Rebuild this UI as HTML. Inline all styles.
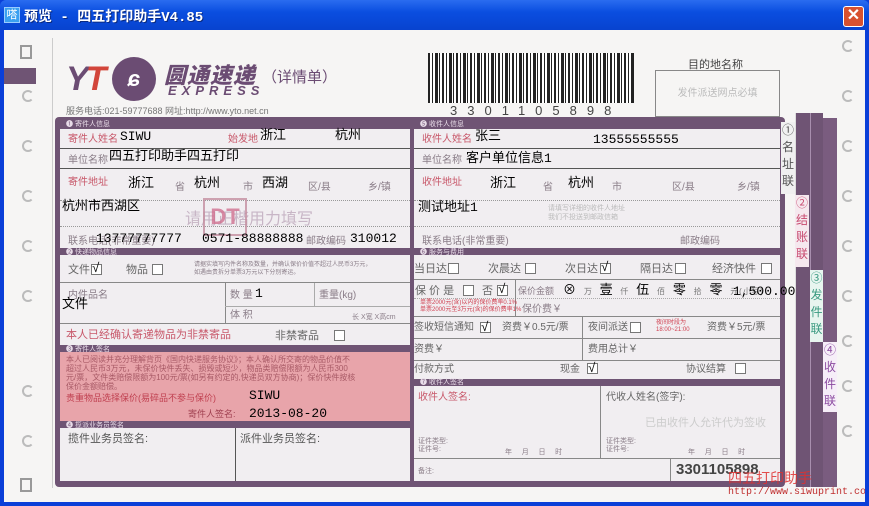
<!DOCTYPE html>
<html><head><meta charset="utf-8">
<style>
*{margin:0;padding:0;box-sizing:border-box}
body{width:869px;height:506px;overflow:hidden;background:#0a3fd8;font-family:"Liberation Sans","Noto Sans CJK SC",sans-serif;position:relative}
.a{position:absolute}
.t{position:absolute;white-space:nowrap;font-family:"Liberation Mono","Noto Sans CJK SC",monospace;font-size:13px;color:#000;line-height:14px}
.l{position:absolute;white-space:nowrap;font-size:10px;color:#8a7d88;line-height:11px}
.s{position:absolute;white-space:nowrap;font-size:11px;color:#666;line-height:12px}
.r{color:#c8586a}
.hd{position:absolute;background:#6f5474;color:#e8dce8;font-size:7px;line-height:7px;padding-left:6px}
.cb{display:inline-block;width:10px;height:10px;border:1px solid #777;background:#fff;vertical-align:middle}
.b{position:absolute;width:11px;height:11px;border:1px solid #777;background:#fff}
.hole{position:absolute;width:12px;height:12px;border:2px solid #bbb;border-right-color:transparent;border-radius:50%}
</style></head><body>
<div class="a" style="left:0;top:0;width:869px;height:30px;background:linear-gradient(#2a6cf0,#0a4ee0 40%,#0843cf);border-radius:6px 6px 0 0"></div>
<div class="a" style="left:4px;top:7px;width:16px;height:16px;background:#3aa0f0;border:1px solid #9cf;color:#fff;font-size:11px;line-height:14px;text-align:center">嗒</div>
<div class="a" style="left:24px;top:6px;color:#fff;font-weight:bold;font-size:14px;font-family:'Liberation Mono','Noto Sans CJK SC',monospace;text-shadow:1px 1px #0a2a80">预览 - 四五打印助手V4.85</div>
<div class="a" style="left:843px;top:6px;width:21px;height:21px;background:#d8512f;border:1px solid #fff;border-radius:3px;color:#fff;font-size:16px;line-height:18px;text-align:center;font-weight:bold">✕</div>
<div class="a" style="left:4px;top:30px;width:861px;height:472px;background:#f6f5f4"></div>
<div class="a" style="left:20px;top:45px;width:12px;height:14px;border:2px solid #999"></div>
<div class="a" style="left:4px;top:68px;width:32px;height:16px;background:#6f5474"></div>
<div class="hole" style="left:22px;top:90px"></div><div class="hole" style="left:22px;top:140px"></div><div class="hole" style="left:22px;top:190px"></div><div class="hole" style="left:22px;top:240px"></div><div class="hole" style="left:22px;top:290px"></div><div class="hole" style="left:22px;top:385px"></div><div class="hole" style="left:22px;top:435px"></div>
<div class="a" style="left:20px;top:478px;width:12px;height:14px;border:2px solid #999"></div>
<div class="hole" style="left:842px;top:40px"></div><div class="hole" style="left:842px;top:90px"></div><div class="hole" style="left:842px;top:140px"></div><div class="hole" style="left:842px;top:190px"></div><div class="hole" style="left:842px;top:240px"></div><div class="hole" style="left:842px;top:290px"></div><div class="hole" style="left:842px;top:335px"></div><div class="hole" style="left:842px;top:380px"></div><div class="hole" style="left:842px;top:425px"></div>
<div class="a" style="left:52px;top:38px;width:1px;height:450px;background:#ccc"></div>
<div class="a" style="left:66px;top:60px;font:italic 900 34px 'Liberation Sans';color:#6b4c73;letter-spacing:-3px">Y<span style="color:#d2453a">T</span></div>
<div class="a" style="left:112px;top:57px;width:44px;height:44px;border-radius:50%;background:#6b4c73;color:#fff;font:italic bold 22px 'Liberation Sans';text-align:center;line-height:44px">ɕ</div>
<div class="a" style="left:164px;top:58px;font:italic 900 22px 'Noto Sans CJK SC';color:#6b4c73;letter-spacing:1px">圆通速递</div>
<div class="a" style="left:168px;top:83px;font:italic bold 13px 'Liberation Sans';color:#6b4c73;letter-spacing:5px">EXPRESS</div>
<div class="a" style="left:262px;top:66px;font-size:15px;color:#6b4c73">（详情单）</div>
<div class="a" style="left:66px;top:104px;font-size:9px;color:#777">服务电话:021-59777688 网址:http://www.yto.net.cn</div>
<div class="a" style="left:428px;top:53px;width:206px;height:50px;background:repeating-linear-gradient(90deg,#222 0 2px,#fff 2px 4px,#222 4px 5px,#fff 5px 7px,#222 7px 10px,#fff 10px 11px,#222 11px 12px,#fff 12px 14px)"></div>
<div class="a" style="left:450px;top:103px;font-size:13px;color:#444;letter-spacing:10px">3301105898</div>
<div class="a" style="left:688px;top:56px;font-size:11px;color:#444">目的地名称</div>
<div class="a" style="left:655px;top:70px;width:125px;height:47px;border:1px solid #888;color:#bbb;font-size:10px;text-align:center;line-height:45px">发件派送网点必填</div>
<div class="a" style="left:55px;top:117px;width:730px;height:370px;background:#6f5474;border-radius:4px"></div>
<div class="a" style="left:795px;top:113px;width:28px;height:374px;background:#6f5474"></div>
<div class="a" style="left:823px;top:118px;width:14px;height:369px;background:#7a5c7f"></div>
<div class="a" style="left:795px;top:113px;width:1px;height:374px;background:#ddd"></div>
<div class="a" style="left:810px;top:113px;width:1px;height:374px;background:#a88fae"></div>
<div class="a" style="left:781px;top:122px;width:14px;height:72px;background:#f0f0f0;color:#555;font-size:12px;line-height:17px;text-align:center">①名址联</div>
<div class="a" style="left:795px;top:195px;width:14px;height:72px;background:#f5e8ee;color:#c84a70;font-size:12px;line-height:17px;text-align:center">②结账联</div>
<div class="a" style="left:810px;top:270px;width:13px;height:72px;background:#e8f5ef;color:#3a9a80;font-size:12px;line-height:17px;text-align:center">③发件联</div>
<div class="a" style="left:823px;top:342px;width:14px;height:70px;background:#f6eef8;color:#8b4aa0;font-size:12px;line-height:17px;text-align:center">④收件联</div>
<div class="hd" style="left:60px;top:121px;width:350px;height:8px">❶ 寄件人信息</div>
<div class="a" style="left:60px;top:129px;width:350px;height:119px;background:#f1eef1"></div>
<div class="a" style="left:60px;top:148px;width:350px;height:1px;background:#555"></div>
<div class="a" style="left:60px;top:168px;width:350px;height:1px;background:#555"></div>
<div class="a" style="left:60px;top:200px;width:350px;border-top:1px dotted #999"></div>
<div class="a" style="left:60px;top:226px;width:350px;border-top:1px dotted #999"></div>
<div class="l r" style="left:68px;top:134px">寄件人姓名</div><div class="l r" style="left:228px;top:134px">始发地</div>
<div class="l" style="left:68px;top:155px">单位名称</div>
<div class="l r" style="left:68px;top:177px">寄件地址</div><div class="l" style="left:175px;top:182px">省</div><div class="l" style="left:243px;top:182px">市</div><div class="l" style="left:308px;top:182px">区/县</div><div class="l" style="left:368px;top:182px">乡/镇</div>
<div class="a" style="left:185px;top:205px;font-size:16px;color:#c8b6c6">请用正楷用力填写</div>
<div class="a" style="left:203px;top:198px;width:44px;height:38px;border:2px solid #c58fa0;color:#d07090;font:bold 22px 'Liberation Sans';text-align:center;line-height:34px;opacity:.8">DT</div>
<div class="l" style="left:68px;top:236px">联系电话(非常重要)</div><div class="l" style="left:306px;top:236px">邮政编码</div>
<div class="hd" style="left:60px;top:249px;width:350px;height:6px">❷ 快递物品信息</div>
<div class="a" style="left:60px;top:255px;width:350px;height:90px;background:#f1eef1"></div>
<div class="a" style="left:60px;top:282px;width:350px;height:1px;background:#888"></div>
<div class="a" style="left:225px;top:283px;width:1px;height:40px;background:#888"></div>
<div class="a" style="left:225px;top:306px;width:185px;height:1px;background:#aaa"></div>
<div class="a" style="left:314px;top:283px;width:1px;height:23px;background:#aaa"></div>
<div class="a" style="left:60px;top:323px;width:350px;height:1px;background:#888"></div>
<div class="s" style="left:68px;top:264px">文件</div><div class="b" style="left:91px;top:264px"></div>
<div class="s" style="left:126px;top:264px">物品</div><div class="b" style="left:152px;top:264px"></div>
<div class="l" style="left:194px;top:261px;font-size:6px;line-height:8px">请据实填写内件名称及数量，并确认保价价值不超过人民币3万元，<br>如遇由贵拆分单票3万元以下分别寄运。</div>
<div class="l" style="left:68px;top:290px">内件品名</div><div class="l" style="left:230px;top:290px">数 量</div><div class="l" style="left:319px;top:290px">重量(kg)</div>
<div class="l" style="left:230px;top:310px">体 积</div><div class="l" style="left:352px;top:312px;font-size:7px">长 X宽 X高cm</div>
<div class="l r" style="left:66px;top:330px;font-size:11px">本人已经确认寄递物品为非禁寄品</div>
<div class="s" style="left:275px;top:330px">非禁寄品</div><div class="b" style="left:334px;top:330px"></div>
<div class="hd" style="left:60px;top:346px;width:350px;height:6px">❸ 寄件人签名</div>
<div class="a" style="left:60px;top:352px;width:350px;height:69px;background:#e8a4aa"></div>
<div class="l" style="left:66px;top:355px;font-size:8px;line-height:9px;color:#a85a66">本人已阅读并充分理解背页《国内快递服务协议》；本人确认所交寄的物品价值不<br>超过人民币3万元，未保价快件丢失、损毁或短少，物品类赔偿限额为人民币300<br>元/票，文件类赔偿限额为100元/票(如另有约定的,快递员双方协商)；保价快件按核<br>保价金额赔偿。</div>
<div class="l" style="left:66px;top:393px;font-size:9px;color:#c04050">贵重物品选择保价(易碎品不参与保价)</div>
<div class="l" style="left:188px;top:409px;font-size:9px;color:#a04050">寄件人签名:</div>
<div class="hd" style="left:60px;top:422px;width:350px;height:6px">❹ 揽派业务员签名</div>
<div class="a" style="left:60px;top:428px;width:350px;height:53px;background:#f1eef1"></div>
<div class="a" style="left:235px;top:428px;width:1px;height:53px;background:#555"></div>
<div class="l" style="left:68px;top:434px;font-size:11px;color:#555">揽件业务员签名:</div>
<div class="l" style="left:240px;top:434px;font-size:11px;color:#555">派件业务员签名:</div>
<div class="hd" style="left:414px;top:121px;width:366px;height:8px">❺ 收件人信息</div>
<div class="a" style="left:414px;top:129px;width:366px;height:119px;background:#f1eef1"></div>
<div class="a" style="left:414px;top:148px;width:366px;height:1px;background:#555"></div>
<div class="a" style="left:414px;top:168px;width:366px;height:1px;background:#555"></div>
<div class="a" style="left:414px;top:200px;width:366px;border-top:1px dotted #999"></div>
<div class="a" style="left:414px;top:226px;width:366px;border-top:1px dotted #999"></div>
<div class="l r" style="left:422px;top:134px">收件人姓名</div>
<div class="l" style="left:422px;top:155px">单位名称</div>
<div class="l r" style="left:422px;top:177px">收件地址</div><div class="l" style="left:543px;top:182px">省</div><div class="l" style="left:612px;top:182px">市</div><div class="l" style="left:672px;top:182px">区/县</div><div class="l" style="left:737px;top:182px">乡/镇</div>
<div class="l" style="left:548px;top:204px;font-size:7px;line-height:9px;color:#bbb">请填写详细的收件人地址<br>我们不投送到邮政信箱</div>
<div class="l" style="left:422px;top:236px">联系电话(非常重要)</div><div class="l" style="left:680px;top:236px">邮政编码</div>
<div class="hd" style="left:414px;top:249px;width:366px;height:6px">❻ 服务与费用</div>
<div class="a" style="left:414px;top:255px;width:366px;height:124px;background:#f1eef1"></div>
<div class="a" style="left:414px;top:279px;width:366px;height:1px;background:#888"></div>
<div class="a" style="left:414px;top:316px;width:366px;height:1px;background:#888"></div>
<div class="a" style="left:414px;top:338px;width:366px;height:1px;background:#888"></div>
<div class="a" style="left:414px;top:360px;width:366px;height:1px;background:#888"></div>
<div class="a" style="left:414px;top:298px;width:366px;border-top:1px dotted #aaa"></div>
<div class="a" style="left:515px;top:280px;width:1px;height:36px;background:#888"></div>
<div class="a" style="left:582px;top:316px;width:1px;height:44px;background:#888"></div>
<div class="s" style="left:414px;top:263px">当日达</div><div class="b" style="left:448px;top:263px"></div>
<div class="s" style="left:488px;top:263px">次晨达</div><div class="b" style="left:525px;top:263px"></div>
<div class="s" style="left:565px;top:263px">次日达</div><div class="b" style="left:600px;top:263px"></div>
<div class="s" style="left:640px;top:263px">隔日达</div><div class="b" style="left:675px;top:263px"></div>
<div class="s" style="left:712px;top:263px">经济快件</div><div class="b" style="left:761px;top:263px"></div>
<div class="s" style="left:415px;top:285px">保 价 是</div><div class="b" style="left:463px;top:285px"></div>
<div class="s" style="left:482px;top:285px">否</div><div class="b" style="left:497px;top:285px"></div>
<div class="l" style="left:518px;top:286px;font-size:9px">保价金额</div>
<div class="l" style="left:420px;top:300px;font-size:6px;line-height:7px;color:#d04050">单票2000元(含)以内的保价费率0.1%<br>单票2000元至3万元(含)的保价费率1%</div>
<div class="l" style="left:522px;top:304px">保价费￥</div>
<div class="s" style="left:414px;top:322px;font-size:10px">签收短信通知</div><div class="b" style="left:480px;top:322px"></div>
<div class="s" style="left:502px;top:322px;font-size:10px">资费￥0.5元/票</div>
<div class="s" style="left:588px;top:322px;font-size:10px">夜间派送</div><div class="b" style="left:630px;top:322px"></div>
<div class="l" style="left:656px;top:320px;font-size:6px;line-height:7px;color:#d04050">夜间时段为<br>18:00~21:00</div>
<div class="s" style="left:707px;top:322px;font-size:10px">资费￥5元/票</div>
<div class="s" style="left:414px;top:344px;font-size:10px">资费￥</div>
<div class="s" style="left:588px;top:344px;font-size:10px">费用总计￥</div>
<div class="s" style="left:414px;top:364px;font-size:10px">付款方式</div>
<div class="s" style="left:560px;top:364px;font-size:10px">现金</div><div class="b" style="left:587px;top:363px"></div>
<div class="s" style="left:686px;top:364px;font-size:10px">协议结算</div><div class="b" style="left:735px;top:363px"></div>
<div class="hd" style="left:414px;top:379px;width:366px;height:7px">❼ 收件人签名</div>
<div class="a" style="left:414px;top:386px;width:366px;height:95px;background:#f1eef1"></div>
<div class="a" style="left:600px;top:386px;width:1px;height:72px;background:#888"></div>
<div class="a" style="left:414px;top:458px;width:366px;height:1px;background:#888"></div>
<div class="a" style="left:670px;top:458px;width:1px;height:23px;background:#888"></div>
<div class="l r" style="left:418px;top:392px;font-size:10px">收件人签名:</div>
<div class="l" style="left:606px;top:392px;font-size:10px;color:#666">代收人姓名(签字):</div>
<div class="l" style="left:645px;top:418px;font-size:11px;color:#ccc">已由收件人允许代为签收</div>
<div class="l" style="left:418px;top:438px;font-size:7px;line-height:8px">证件类型:<br>证件号:</div>
<div class="l" style="left:606px;top:438px;font-size:7px;line-height:8px">证件类型:<br>证件号:</div>
<div class="l" style="left:505px;top:447px;font-size:7px">年&nbsp;&nbsp;&nbsp;&nbsp;&nbsp;月&nbsp;&nbsp;&nbsp;&nbsp;&nbsp;日&nbsp;&nbsp;&nbsp;&nbsp;&nbsp;时</div>
<div class="l" style="left:688px;top:447px;font-size:7px">年&nbsp;&nbsp;&nbsp;&nbsp;&nbsp;月&nbsp;&nbsp;&nbsp;&nbsp;&nbsp;日&nbsp;&nbsp;&nbsp;&nbsp;&nbsp;时</div>
<div class="l" style="left:418px;top:466px;font-size:7px">备注:</div>
<div class="a" style="left:676px;top:461px;font:bold 15px 'Liberation Sans';color:#444">3301105898</div>
<div class="t" style="left:120px;top:130px">SIWU</div>
<div class="t" style="left:260px;top:129px">浙江</div><div class="t" style="left:335px;top:129px">杭州</div>
<div class="t" style="left:109px;top:150px">四五打印助手四五打印</div>
<div class="t" style="left:128px;top:177px">浙江</div><div class="t" style="left:194px;top:177px">杭州</div><div class="t" style="left:262px;top:177px">西湖</div>
<div class="t" style="left:62px;top:200px">杭州市西湖区</div>
<div class="t" style="left:96px;top:232px">13777777777</div><div class="t" style="left:202px;top:232px">0571-88888888</div><div class="t" style="left:350px;top:232px">310012</div>
<div class="t" style="left:475px;top:130px">张三</div><div class="t" style="left:593px;top:133px">13555555555</div>
<div class="t" style="left:466px;top:152px">客户单位信息1</div>
<div class="t" style="left:490px;top:177px">浙江</div><div class="t" style="left:568px;top:177px">杭州</div>
<div class="t" style="left:418px;top:201px">测试地址1</div>
<div class="t" style="left:92px;top:262px">√</div>
<div class="t" style="left:62px;top:298px">文件</div>
<div class="t" style="left:255px;top:287px">1</div>
<div class="t" style="left:249px;top:389px">SIWU</div>
<div class="t" style="left:249px;top:407px">2013-08-20</div>
<div class="t" style="left:601px;top:261px">√</div>
<div class="t" style="left:498px;top:283px">√</div>
<div class="t" style="left:563px;top:284px;font-size:13px">⊗ <span style="font-size:8px;color:#777">万</span> 壹 <span style="font-size:8px;color:#777">仟</span> 伍 <span style="font-size:8px;color:#777">佰</span> 零 <span style="font-size:8px;color:#777">拾</span> 零 <span style="font-size:8px;color:#777">元(小写)</span></div>
<div class="t" style="left:733px;top:285px">1,500.00</div>
<div class="t" style="left:481px;top:321px">√</div>
<div class="t" style="left:588px;top:362px">√</div>
<div class="a" style="left:728px;top:468px;font-size:14px;color:#e03030;font-family:'Noto Sans CJK SC',sans-serif;opacity:.85">四五打印助手</div>
<div class="a" style="left:728px;top:487px;font-family:'Liberation Mono',monospace;font-size:10px;color:#c03030">http://www.siwuprint.co</div>
<div class="a" style="left:0;top:30px;width:4px;height:476px;background:#0a3fd8"></div>
<div class="a" style="left:865px;top:30px;width:4px;height:476px;background:#0a3fd8"></div>
<div class="a" style="left:0;top:502px;width:869px;height:4px;background:#0a3fd8"></div>
</body></html>
